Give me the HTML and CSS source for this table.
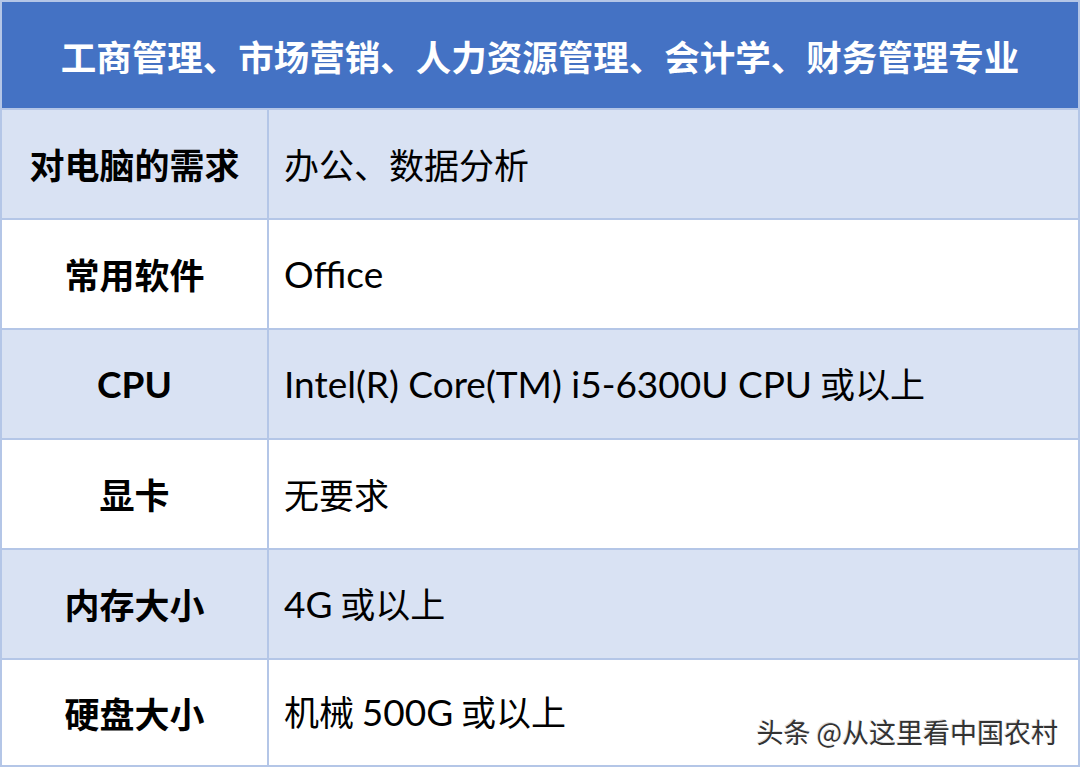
FILE: index.html
```html
<!DOCTYPE html>
<html lang="zh-CN">
<head>
<meta charset="utf-8">
<link rel="stylesheet" href="styles.css">
</head>
<body>
<div class="sheet">
  <table class="spec">
    <colgroup>
      <col class="col-label">
      <col class="col-value">
    </colgroup>
    <thead>
      <tr><th colspan="2" class="title">工商管理、市场营销、人力资源管理、会计学、财务管理专业</th></tr>
    </thead>
    <tbody>
      <tr class="alt"><td class="label">对电脑的需求</td><td class="value">办公、数据分析</td></tr>
      <tr><td class="label">常用软件</td><td class="value"><span class="lat">Office</span></td></tr>
      <tr class="alt"><td class="label"><span class="lat">CPU</span></td><td class="value"><span class="lat">Intel(R) Core(TM) i5-6300U CPU</span> 或以上</td></tr>
      <tr><td class="label">显卡</td><td class="value">无要求</td></tr>
      <tr class="alt"><td class="label">内存大小</td><td class="value"><span class="lat">4G</span> 或以上</td></tr>
      <tr class="last"><td class="label">硬盘大小</td><td class="value">机械 <span class="lat">500G</span> 或以上</td></tr>
    </tbody>
  </table>
  <div class="watermark">头条 @从这里看中国农村</div>
</div>
</body>
</html>
```
FILE: styles.css
```css
html, body {
  margin: 0;
  padding: 0;
  background: #ffffff;
}
body {
  font-family: "Noto Sans CJK SC", "Noto Sans", sans-serif;
  width: 1080px;
  height: 769px;
  overflow: hidden;
}
.sheet {
  position: relative;
  width: 1080px;
  height: 769px;
}
.spec {
  width: 1080px;
  border-collapse: collapse;
  table-layout: fixed;
}
.col-label {
  width: 267px;
}
.spec td, .spec th {
  border: 2px solid #b4c6e7;
  padding: 0;
}
.title {
  height: 106px;
  background: #4472c4;
  color: #ffffff;
  font-size: 35.5px;
  font-weight: 700;
  text-align: center;
  border-color: #8eaadb;
}
.spec tbody tr td {
  height: 108px;
  line-height: 1.2;
}
.spec tbody tr.last td {
  height: 105px;
}
.alt td {
  background: #d9e2f3;
}
.label {
  text-align: center;
  font-weight: 700;
  font-size: 35px;
  color: #000000;
  white-space: nowrap;
}
.value {
  padding-left: 15px !important;
  font-size: 35px;
  color: #000000;
  white-space: nowrap;
}
.lat {
  font-family: "Lato", "Noto Sans", sans-serif;
  font-size: 37px;
}
.watermark {
  position: absolute;
  right: 22px;
  bottom: 18px;
  font-size: 27px;
  color: #333333;
  text-shadow: 1px 1px 0 #ffffff, -1px -1px 0 #dddddd;
}
```
